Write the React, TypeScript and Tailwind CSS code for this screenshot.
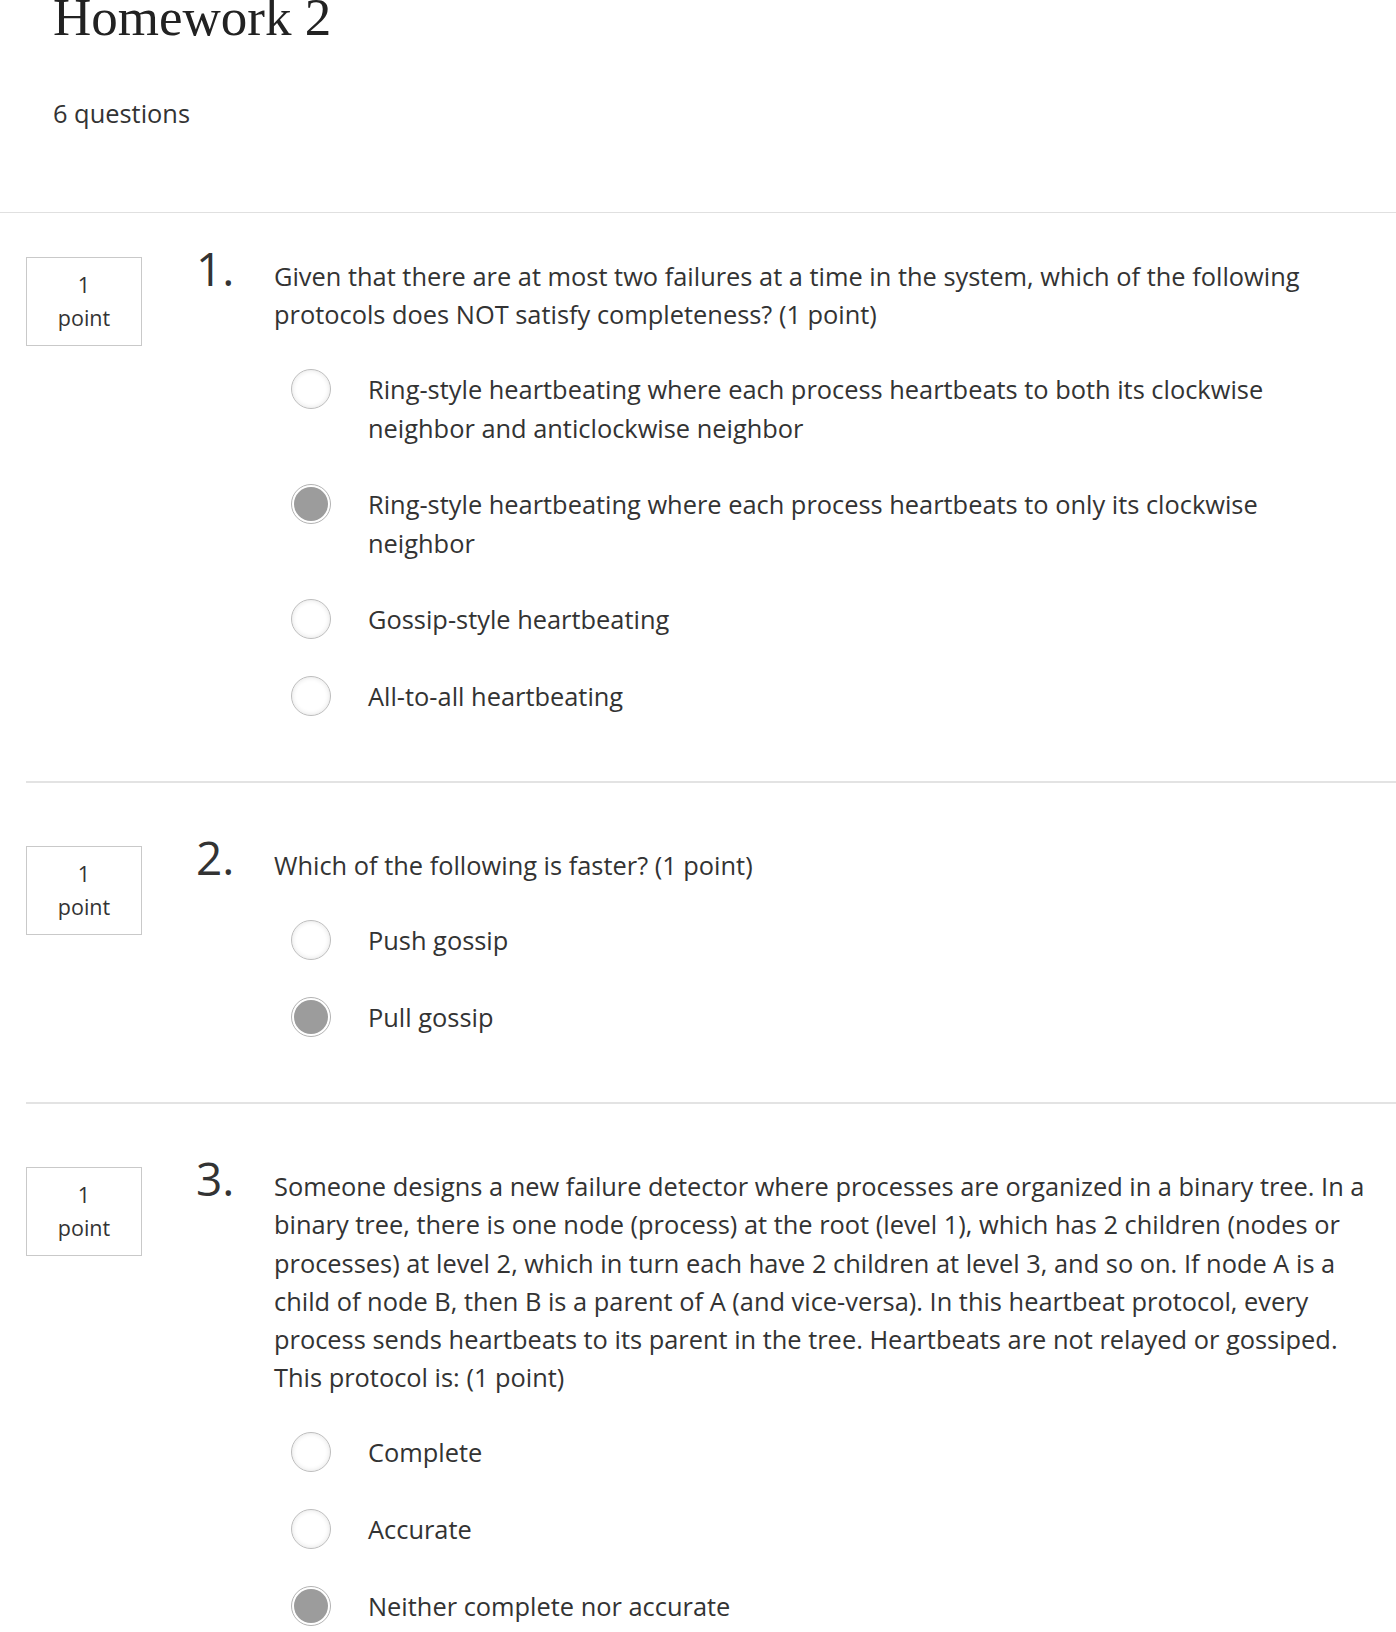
import React from "react";

type Question = {
  text: string;
  options: string[];
  selected: number;
};

// line breaks follow the original page's wrapping
const questions: Question[] = [
  {
    text: "Given that there are at most two failures at a time in the system, which of the following\nprotocols does NOT satisfy completeness? (1 point)",
    options: [
      "Ring-style heartbeating where each process heartbeats to both its clockwise\nneighbor and anticlockwise neighbor",
      "Ring-style heartbeating where each process heartbeats to only its clockwise\nneighbor",
      "Gossip-style heartbeating",
      "All-to-all heartbeating",
    ],
    selected: 1,
  },
  {
    text: "Which of the following is faster? (1 point)",
    options: ["Push gossip", "Pull gossip"],
    selected: 1,
  },
  {
    text: "Someone designs a new failure detector where processes are organized in a binary tree. In a\nbinary tree, there is one node (process) at the root (level 1), which has 2 children (nodes or\nprocesses) at level 2, which in turn each have 2 children at level 3, and so on. If node A is a\nchild of node B, then B is a parent of A (and vice-versa). In this heartbeat protocol, every\nprocess sends heartbeats to its parent in the tree. Heartbeats are not relayed or gossiped.\nThis protocol is: (1 point)",
    options: ["Complete", "Accurate", "Neither complete nor accurate"],
    selected: 2,
  },
];

function Radio({ checked }: { checked: boolean }) {
  if (checked) {
    return (
      <div className="h-[40px] w-[40px] shrink-0 rounded-full border border-[#b3b3b3] bg-white p-[2px]">
        <div className="h-full w-full rounded-full bg-[#9c9c9c]" />
      </div>
    );
  }
  return (
    <div className="h-[40px] w-[40px] shrink-0 rounded-full border border-[#bdbdbd] bg-white shadow-[inset_0_0_5px_rgba(0,0,0,0.12)]" />
  );
}

function QuestionBlock({ q, index }: { q: Question; index: number }) {
  return (
    <div className="flex items-start">
      <div className="ml-[26px] w-[116px] shrink-0 border border-[#c9c9c9] pb-[11px] pt-[10px] text-center text-[21.5px] leading-[33px] text-[#333]">
        <div>1</div>
        <div>point</div>
      </div>
      <div className="ml-[54px] mt-[-8px] w-[78px] shrink-0 text-[46px] leading-[38px] text-[#333]">
        {index + 1}.
      </div>
      <div className="w-[1115px]">
        <p className="whitespace-pre-line text-[25.4px] leading-[38.2px] text-[#333]">{q.text}</p>
        <div className="mt-[37px] flex flex-col gap-[38.5px] pl-[17px]">
          {q.options.map((opt, i) => (
            <div key={i} className="flex items-start gap-[37px]">
              <div className="flex h-[38px] items-center">
                <Radio checked={i === q.selected} />
              </div>
              <span className="whitespace-pre-line text-[25.4px] leading-[38.2px] text-[#333]">{opt}</span>
            </div>
          ))}
        </div>
      </div>
    </div>
  );
}

export default function App() {
  return (
    <div className="min-h-screen overflow-hidden bg-white font-['Open_Sans',sans-serif] text-[#333]">
      <div className="border-b border-[#e0e0e0] px-[53px] pb-[80px]">
        <h1 className="mt-[-9px] font-['Liberation_Serif',serif] text-[53px] font-normal leading-[52px] text-[#222]">
          Homework 2
        </h1>
        <p className="mt-[51px] text-[25.4px] leading-[38px] text-[#333]">6 questions</p>
      </div>

      {questions.map((q, i) => (
        <div
          key={i}
          className={
            i === 0
              ? "pb-[66px] pt-[44px]"
              : "ml-[26px] border-t-2 border-[#e3e3e3] pb-[66px] pt-[63px]"
          }
        >
          <div className={i === 0 ? "" : "ml-[-26px]"}>
            <QuestionBlock q={q} index={i} />
          </div>
        </div>
      ))}
    </div>
  );
}
